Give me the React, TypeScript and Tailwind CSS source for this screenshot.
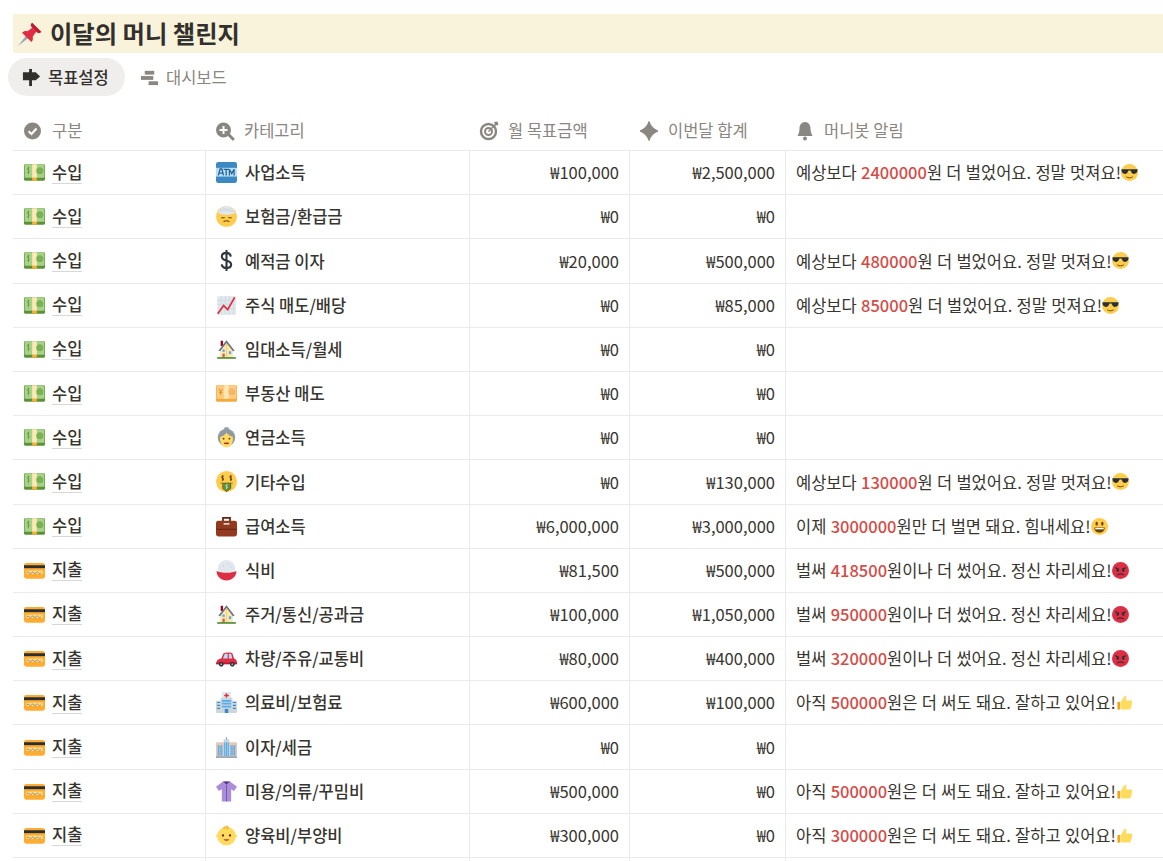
import type { ReactNode } from 'react';

type IconProps = { className?: string };

const Emoji = ({ className = 'w-[21px] h-[21px]', children }: IconProps & { children: ReactNode }) => (
    <svg viewBox="0 0 36 36" className={`${className} shrink-0`} aria-hidden="true">
        {children}
    </svg>
);

const Pin = (p: IconProps) => (
    <Emoji {...p}>
        <path d="M0 36 L13 19 L17 23 Z" fill="#99AAB5" />
        <path d="M21 1 L35 15 L31 17 L27 15 L22 22 C23 26 22 28 20 30 L6 16 C9 13 12 13 14 14 L21 9 L19 5 Z" fill="#DD2E44" />
        <path d="M21 1 L35 15 L31 17 L19 5 Z" fill="#BE1931" />
    </Emoji>
);

const Money = (p: IconProps) => (
    <Emoji {...p}>
        <rect x="0" y="4" width="36" height="28" rx="2" fill="#5C913B" />
        <rect x="1" y="4" width="34" height="23" fill="#A6D388" />
        <rect x="14" y="4" width="8" height="23" fill="#FFE8B6" />
        <rect x="14" y="27" width="8" height="5" fill="#FFAC33" />
        <circle cx="27" cy="15" r="6" fill="#77B255" />
        <path d="M9 10 C6 9 5 12 7 13.500 C10 15 9 19 6 18 M7.500 8 V21" stroke="#5C913B" strokeWidth="1.300" fill="none" />
    </Emoji>
);

const Card = (p: IconProps) => (
    <Emoji {...p}>
        <rect x="0" y="5" width="36" height="27" rx="4" fill="#FFAC33" />
        <rect x="0" y="9" width="36" height="5" fill="#292F33" />
        <rect x="4" y="18" width="28" height="6" fill="#FFD983" />
        <path d="M5 22 q2 -3 4 0 t4 0 t4 0 t4 0 t4 0 t4 0" stroke="#66757F" strokeWidth="1.200" fill="none" />
    </Emoji>
);

const Atm = (p: IconProps) => (
    <Emoji {...p}>
        <rect x="0" y="0" width="36" height="36" rx="4" fill="#3B88C3" />
        <rect x="0" y="10" width="36" height="15" fill="#BBDDF5" />
        <path d="M4 23 L7 12 H10 L13 23 M5 19 H12 M13 12.500 H22 M17.500 12.500 V23 M23 23 V12.500 L27 20 L31 12.500 V23" stroke="#226699" strokeWidth="2.200" fill="none" />
    </Emoji>
);

const Bandage = (p: IconProps) => (
    <Emoji {...p}>
        <circle cx="18" cy="18" r="18" fill="#FFCC4D" />
        <path d="M3 12 C6 4 12 0 18 0 C25 0 31 4 33 12 C26 16 10 16 3 12 Z" fill="#E1E8ED" />
        <path d="M6 6 L30 10 M10 3 L32 9 M5 10 L27 4" stroke="#CCD6DD" strokeWidth="1.200" />
        <path d="M9 20 H15 M21 20 H27 M13 27 C16 25 20 25 23 27" stroke="#664500" strokeWidth="1.800" fill="none" />
    </Emoji>
);

const Dollar = (p: IconProps) => (
    <Emoji {...p}>
        <path d="M25 10 C24 6 21 5 18 5 C13 5 10 8 10 11.500 C10 20 26 16 26 25 C26 29 22 31 18 31 C14 31 11 29 10 26 M18 1 V35" stroke="#31373D" strokeWidth="3.600" fill="none" strokeLinecap="round" />
    </Emoji>
);

const Chart = (p: IconProps) => (
    <Emoji {...p}>
        <rect x="2" y="2" width="32" height="32" fill="#E1E8ED" />
        <path d="M2 9 H34 M2 16 H34 M2 23 H34 M9 2 V34 M16 2 V34 M23 2 V34 M30 2 V34" stroke="#CCD6DD" strokeWidth="1" />
        <path d="M3 32 L13 18 L20 25 L32 4" stroke="#DD2E44" strokeWidth="3" fill="none" />
    </Emoji>
);

const House = (p: IconProps) => (
    <Emoji {...p}>
        <rect x="8" y="3" width="4" height="9" fill="#A0041E" />
        <path d="M7 18 L18 5 L29 18 V32 H7 Z" fill="#FFE8B6" />
        <path d="M4 20 L18 2 L32 20 L29 21 L18 7 L7 21 Z" fill="#66757F" />
        <path d="M18 7 L18 32" stroke="#FFCC4D" strokeWidth="1.500" />
        <rect x="11" y="25" width="4" height="7" fill="#C1694F" />
        <rect x="22" y="21" width="4" height="5" fill="#55ACEE" />
        <rect x="11" y="18" width="4" height="4" fill="#55ACEE" />
        <rect x="2" y="31" width="32" height="3" fill="#5C913B" />
    </Emoji>
);

const Yen = (p: IconProps) => (
    <Emoji {...p}>
        <rect x="0" y="4" width="36" height="28" rx="2" fill="#F5A83C" />
        <rect x="1" y="4" width="34" height="23" fill="#FFCC7F" />
        <rect x="14" y="4" width="8" height="23" fill="#FFE8B6" />
        <circle cx="27" cy="15" r="6" fill="#F4B66A" />
        <path d="M5 10 L8 15 L11 10 M8 15 V21 M5.500 16 H10.500" stroke="#C97B1E" strokeWidth="1.300" fill="none" />
    </Emoji>
);

const Granny = (p: IconProps) => (
    <Emoji {...p}>
        <circle cx="18" cy="5" r="5" fill="#99AAB5" />
        <circle cx="18" cy="18" r="15" fill="#8F9AA1" />
        <path d="M7 17 C12 16 16 13 18 10 C21 14 25 16 29 17 C30 28 24 35 18 35 C12 35 6 28 7 17 Z" fill="#FFDC5D" />
        <circle cx="13" cy="20" r="1.500" fill="#662113" />
        <circle cx="23" cy="20" r="1.500" fill="#662113" />
        <path d="M14 28 H22" stroke="#BE1931" strokeWidth="2.500" />
    </Emoji>
);

const MoneyFace = (p: IconProps) => (
    <Emoji {...p}>
        <circle cx="18" cy="18" r="18" fill="#FFCC4D" />
        <path d="M13 9 C10 8 9 11 11 12 C14 13 13 16 10 15 M11.500 7 V17 M27 9 C24 8 23 11 25 12 C28 13 27 16 24 15 M25.500 7 V17" stroke="#664500" strokeWidth="1.800" fill="none" />
        <path d="M7 20 H29 V21 H26 V30 L18 36 L11 30 V21 H7 Z" fill="#664500" />
        <path d="M12 21 H25 V30 L18 35 L12 30 Z" fill="#5C913B" />
        <path d="M20 24 C17 23 16 26 18 27 C20 28 20 30 17 29.500" stroke="#FFFFFF" strokeWidth="1.500" fill="none" />
    </Emoji>
);

const Briefcase = (p: IconProps) => (
    <Emoji {...p}>
        <path d="M12 9 V3 H24 V9" stroke="#662113" strokeWidth="3" fill="none" />
        <rect x="0" y="8" width="36" height="27" rx="4" fill="#92391E" />
        <rect x="0" y="22" width="36" height="1.500" fill="#662113" />
        <rect x="13" y="12" width="10" height="3" fill="#CCD6DD" />
    </Emoji>
);

const Rice = (p: IconProps) => (
    <Emoji {...p}>
        <circle cx="18" cy="15" r="15" fill="#E1E8ED" />
        <path d="M1 19 C8 23 28 23 35 19 C35 29 27 35 18 35 C9 35 1 29 1 19 Z" fill="#DD2E44" />
        <circle cx="13" cy="10" r="0.800" fill="#99AAB5" />
        <circle cx="20" cy="7" r="0.800" fill="#99AAB5" />
        <circle cx="25" cy="12" r="0.800" fill="#99AAB5" />
    </Emoji>
);

const Car = (p: IconProps) => (
    <Emoji {...p}>
        <path d="M1 27 C0 21 4 19 9 18 L13 9 C14 8 26 7 28 9 L31 18 C35 19 36 22 36 27 Z" fill="#DD2E44" />
        <path d="M12 18 L15 10 H20 V18 Z M22 10 H26 L28 18 H22 Z" fill="#BBDDF5" />
        <rect x="0" y="25" width="36" height="3" fill="#BE1931" />
        <circle cx="9" cy="28" r="4" fill="#292F33" />
        <circle cx="28" cy="28" r="4" fill="#292F33" />
        <circle cx="9" cy="28" r="1.700" fill="#99AAB5" />
        <circle cx="28" cy="28" r="1.700" fill="#99AAB5" />
    </Emoji>
);

const Hospital = (p: IconProps) => (
    <Emoji {...p}>
        <rect x="10" y="0" width="16" height="12" fill="#E1E8ED" />
        <path d="M18 2 V10 M14 6 H22" stroke="#DD2E44" strokeWidth="2.500" />
        <rect x="8" y="10" width="20" height="26" fill="#CCD6DD" />
        <rect x="0" y="15" width="36" height="21" rx="2" fill="#CCD6DD" />
        <path d="M10 15 H26 M10 20 H26 M10 25 H26" stroke="#55ACEE" strokeWidth="3" />
        <path d="M2 18 H7 M2 23 H7 M2 28 H7 M29 18 H34 M29 23 H34 M29 28 H34" stroke="#3B88C3" strokeWidth="2" />
        <rect x="15" y="29" width="6" height="7" fill="#3B88C3" />
    </Emoji>
);

const Office = (p: IconProps) => (
    <Emoji {...p}>
        <rect x="0" y="9" width="36" height="27" rx="2" fill="#E6C9B5" />
        <rect x="13" y="4" width="10" height="32" fill="#CCD6DD" />
        <rect x="17" y="0" width="2" height="5" fill="#99AAB5" />
        <path d="M15 9 V33 M18 9 V33 M21 9 V33 M4 14 V32 M7 14 V32 M10 14 V32 M26 14 V32 M29 14 V32 M32 14 V32" stroke="#55ACEE" strokeWidth="2" />
        <rect x="0" y="33" width="36" height="3" fill="#99AAB5" />
    </Emoji>
);

const Blouse = (p: IconProps) => (
    <Emoji {...p}>
        <path d="M12 1 H24 L36 10 L31 17 L26 14 V35 H10 V14 L5 17 L0 10 Z" fill="#AA8DD8" />
        <path d="M12 1 H24 L18 6 Z" fill="#553788" />
        <path d="M18 6 V35" stroke="#744EAA" strokeWidth="1.500" />
    </Emoji>
);

const Baby = (p: IconProps) => (
    <Emoji {...p}>
        <circle cx="3" cy="19" r="3" fill="#FFDC5D" />
        <circle cx="33" cy="19" r="3" fill="#FFDC5D" />
        <circle cx="18" cy="19" r="16" fill="#FFDC5D" />
        <path d="M14 7 C12 2 20 0 21 4 C22 7 17 7 18 4" stroke="#F4900C" strokeWidth="1.500" fill="none" />
        <circle cx="12" cy="18" r="2" fill="#662113" />
        <circle cx="24" cy="18" r="2" fill="#662113" />
        <path d="M13 24 C15 29 21 29 23 24 Z" fill="#C1694F" />
    </Emoji>
);

const Cool = (p: IconProps) => (
    <Emoji {...p}>
        <circle cx="18" cy="18" r="18" fill="#FFCC4D" />
        <path d="M1 11 H35 V14 C34 21 27 23 23 19 L20 14 H16 L13 19 C9 23 2 21 1 14 Z" fill="#292F33" />
        <path d="M11 27 C15 30 21 30 25 27" stroke="#664500" strokeWidth="2" fill="none" />
    </Emoji>
);

const Grin = (p: IconProps) => (
    <Emoji {...p}>
        <circle cx="18" cy="18" r="18" fill="#FFCC4D" />
        <ellipse cx="12" cy="12" rx="2.500" ry="4" fill="#664500" />
        <ellipse cx="24" cy="12" rx="2.500" ry="4" fill="#664500" />
        <path d="M7 20 H29 C29 27 24 31 18 31 C12 31 7 27 7 20 Z" fill="#664500" />
        <path d="M9 21 H27 V24 H9 Z" fill="#FFFFFF" />
    </Emoji>
);

const Angry = (p: IconProps) => (
    <Emoji {...p}>
        <circle cx="18" cy="18" r="18" fill="#DD2E44" />
        <path d="M7 12 L15 16 M29 12 L21 16" stroke="#292F33" strokeWidth="3" />
        <circle cx="12" cy="18" r="2.500" fill="#292F33" />
        <circle cx="24" cy="18" r="2.500" fill="#292F33" />
        <path d="M11 28 C14 24 22 24 25 28" stroke="#292F33" strokeWidth="2.500" fill="none" />
    </Emoji>
);

const Thumb = (p: IconProps) => (
    <Emoji {...p}>
        <path d="M3 17 H9 V33 H3 Z" fill="#F7A21B" />
        <path d="M10 17 L17 6 C18 3 22 3 22 7 L21 14 H32 C35 14 35 18 33 19 C35 20 35 23 32.500 24 C34 26 33 28 31 28.500 C32 31 30 33 28 33 H14 L10 31 Z" fill="#FFDB5E" />
    </Emoji>
);

// header / tab glyphs
const Glyph = ({ className = 'w-[20px] h-[20px] text-[#8a8681]', children }: IconProps & { children: ReactNode }) => (
    <svg viewBox="0 0 20 20" fill="currentColor" className={`${className} shrink-0`} aria-hidden="true">
        {children}
    </svg>
);

const CheckCircle = () => (
    <Glyph>
        <circle cx="9.500" cy="10" r="8.500" />
        <path d="M5.500 10.300 L8.500 13 L13.500 7.500" stroke="#fff" strokeWidth="2" fill="none" />
    </Glyph>
);

const ZoomPlus = () => (
    <Glyph>
        <path d="M8.500 1.500 A7.500 7.500 0 1 0 8.500 16.500 A7.500 7.500 0 1 0 8.500 1.500 Z M7.500 5 H9.500 V8 H12.500 V10 H9.500 V13 H7.500 V10 H4.500 V8 H7.500 Z" fillRule="evenodd" />
        <path d="M14 14 L18 18" stroke="currentColor" strokeWidth="3" strokeLinecap="round" />
    </Glyph>
);

const Target = () => (
    <Glyph>
        <circle cx="9.500" cy="10.500" r="7.500" stroke="currentColor" strokeWidth="2.400" fill="none" />
        <circle cx="9.500" cy="10.500" r="3.500" stroke="currentColor" strokeWidth="2" fill="none" />
        <path d="M9.500 10.500 L17 3" stroke="currentColor" strokeWidth="1.600" fill="none" />
        <path d="M15 1 L18.500 0.500 L19.500 4 L16.500 4.500 Z" />
    </Glyph>
);

const Diamond = () => (
    <Glyph>
        <path d="M10 0.500 C11.500 5 14.500 8 19 10 C14.500 12 11.500 15 10 19.500 C8.500 15 5.500 12 1 10 C5.500 8 8.500 5 10 0.500 Z" stroke="currentColor" strokeWidth="1" strokeLinejoin="round" />
    </Glyph>
);

const Bell = () => (
    <Glyph>
        <path d="M10 1 C6.500 1 4.500 4 4.500 7.500 C4.500 11 3.500 13 2.500 15 H17.500 C16.500 13 15.500 11 15.500 7.500 C15.500 4 13.500 1 10 1 Z" />
        <circle cx="10" cy="17.500" r="2" />
    </Glyph>
);

const Signpost = () => (
    <Glyph className="w-[19px] h-[19px] text-[#32302c]">
        <rect x="7.500" y="1" width="3" height="18" />
        <path d="M1 4.500 H14.500 L19 9 L14.500 13 H1 Z" />
    </Glyph>
);

const Timeline = () => (
    <Glyph className="w-[19px] h-[19px] text-[#8a8681]">
        <rect x="5" y="3" width="10" height="4" />
        <rect x="1" y="8.500" width="13" height="4" />
        <rect x="9" y="14" width="10" height="4" />
    </Glyph>
);

type Row = {
    kind: '수입' | '지출';
    icon: (p: IconProps) => ReactNode;
    name: string;
    target: string;
    total: string;
    before?: string;
    num?: string;
    after?: string;
    face?: (p: IconProps) => ReactNode;
};

const gain = (num: string) => ({ before: '예상보다 ', num, after: '원 더 벌었어요. 정말 멋져요!', face: Cool });
const over = (num: string) => ({ before: '벌써 ', num, after: '원이나 더 썼어요. 정신 차리세요!', face: Angry });
const left = (num: string) => ({ before: '아직 ', num, after: '원은 더 써도 돼요. 잘하고 있어요!', face: Thumb });

const rows: Row[] = [
    { kind: '수입', icon: Atm, name: '사업소득', target: '₩100,000', total: '₩2,500,000', ...gain('2400000') },
    { kind: '수입', icon: Bandage, name: '보험금/환급금', target: '₩0', total: '₩0' },
    { kind: '수입', icon: Dollar, name: '예적금 이자', target: '₩20,000', total: '₩500,000', ...gain('480000') },
    { kind: '수입', icon: Chart, name: '주식 매도/배당', target: '₩0', total: '₩85,000', ...gain('85000') },
    { kind: '수입', icon: House, name: '임대소득/월세', target: '₩0', total: '₩0' },
    { kind: '수입', icon: Yen, name: '부동산 매도', target: '₩0', total: '₩0' },
    { kind: '수입', icon: Granny, name: '연금소득', target: '₩0', total: '₩0' },
    { kind: '수입', icon: MoneyFace, name: '기타수입', target: '₩0', total: '₩130,000', ...gain('130000') },
    { kind: '수입', icon: Briefcase, name: '급여소득', target: '₩6,000,000', total: '₩3,000,000', before: '이제 ', num: '3000000', after: '원만 더 벌면 돼요. 힘내세요!', face: Grin },
    { kind: '지출', icon: Rice, name: '식비', target: '₩81,500', total: '₩500,000', ...over('418500') },
    { kind: '지출', icon: House, name: '주거/통신/공과금', target: '₩100,000', total: '₩1,050,000', ...over('950000') },
    { kind: '지출', icon: Car, name: '차량/주유/교통비', target: '₩80,000', total: '₩400,000', ...over('320000') },
    { kind: '지출', icon: Hospital, name: '의료비/보험료', target: '₩600,000', total: '₩100,000', ...left('500000') },
    { kind: '지출', icon: Office, name: '이자/세금', target: '₩0', total: '₩0' },
    { kind: '지출', icon: Blouse, name: '미용/의류/꾸밈비', target: '₩500,000', total: '₩0', ...left('500000') },
    { kind: '지출', icon: Baby, name: '양육비/부양비', target: '₩300,000', total: '₩0', ...left('300000') },
];

const gridCols = 'grid grid-cols-[192px_264px_160px_156px_1fr]';
const headCell = 'flex items-center gap-[9px] pl-[10px] text-[16.5px] text-[#8a8681]';
const cell = 'flex items-center border-l border-[#ebeaea]';

function TableRow({ row }: { row: Row }) {
    const Icon = row.icon;
    const Face = row.face;
    return (
        <div className={`${gridCols} h-[44.2px] border-b border-[#ebeaea] text-[16.5px] text-[#37352f]`}>
            <div className="flex items-center gap-[7px] pl-[11px]">
                {row.kind === '수입' ? <Money /> : <Card />}
                <span className="border-b border-[#d9d8d6] leading-[21px] font-medium">{row.kind}</span>
            </div>
            <div className={`${cell} gap-[8px] pl-[10px] font-medium`}>
                <Icon />
                <span>{row.name}</span>
            </div>
            <div className={`${cell} justify-end pr-[10px]`}>{row.target}</div>
            <div className={`${cell} justify-end pr-[10px]`}>{row.total}</div>
            <div className={`${cell} pl-[10px] whitespace-nowrap [word-spacing:0.6px]`}>
                {row.num && (
                    <>
                        <span className="whitespace-pre">{row.before}</span>
                        <span className="font-medium text-[#d44c47]">{row.num}</span>
                        <span>{row.after}</span>
                        {Face && <Face className="w-[17px] h-[17px]" />}
                    </>
                )}
            </div>
        </div>
    );
}

export default function App() {
    return (
        <div className="h-[861px] overflow-hidden bg-white pt-[14px] font-['Noto_Sans_CJK_KR','Noto_Sans',sans-serif]">
            {/* Title callout */}
            <div className="ml-[13px] flex h-[39px] items-center gap-[8px] bg-[#faf3dc] pl-[5px]">
                <Pin className="w-[24px] h-[24px]" />
                <h1 className="text-[24.3px] font-bold text-[#32302c]">이달의 머니 챌린지</h1>
            </div>

            {/* View tabs */}
            <div className="mt-[5px] ml-[8px] flex h-[38px] items-center gap-[15px]">
                <div className="flex h-[38px] w-[117px] items-center gap-[7px] rounded-full bg-[#efeeec] pl-[14px] text-[16.5px] font-medium text-[#32302c]">
                    <Signpost />
                    목표설정
                </div>
                <div className="flex items-center gap-[7px] text-[16.5px] text-[#8a8681]">
                    <Timeline />
                    대시보드
                </div>
            </div>

            {/* Table */}
            <div className="ml-[13px]">
                <div className={`${gridCols} mt-[15px] h-[40px] border-b border-[#ebeaea]`}>
                    <div className={headCell}>
                        <CheckCircle />
                        구분
                    </div>
                    <div className={headCell}>
                        <ZoomPlus />
                        카테고리
                    </div>
                    <div className={headCell}>
                        <Target />
                        월 목표금액
                    </div>
                    <div className={headCell}>
                        <Diamond />
                        이번달 합계
                    </div>
                    <div className={headCell}>
                        <Bell />
                        머니봇 알림
                    </div>
                </div>
                {rows.map((row) => (
                    <TableRow key={row.name} row={row} />
                ))}
                <div className={`${gridCols} h-[44px]`}>
                    <div />
                    <div className={cell} />
                    <div className={cell} />
                    <div className={cell} />
                    <div className={cell} />
                </div>
            </div>
        </div>
    );
}
